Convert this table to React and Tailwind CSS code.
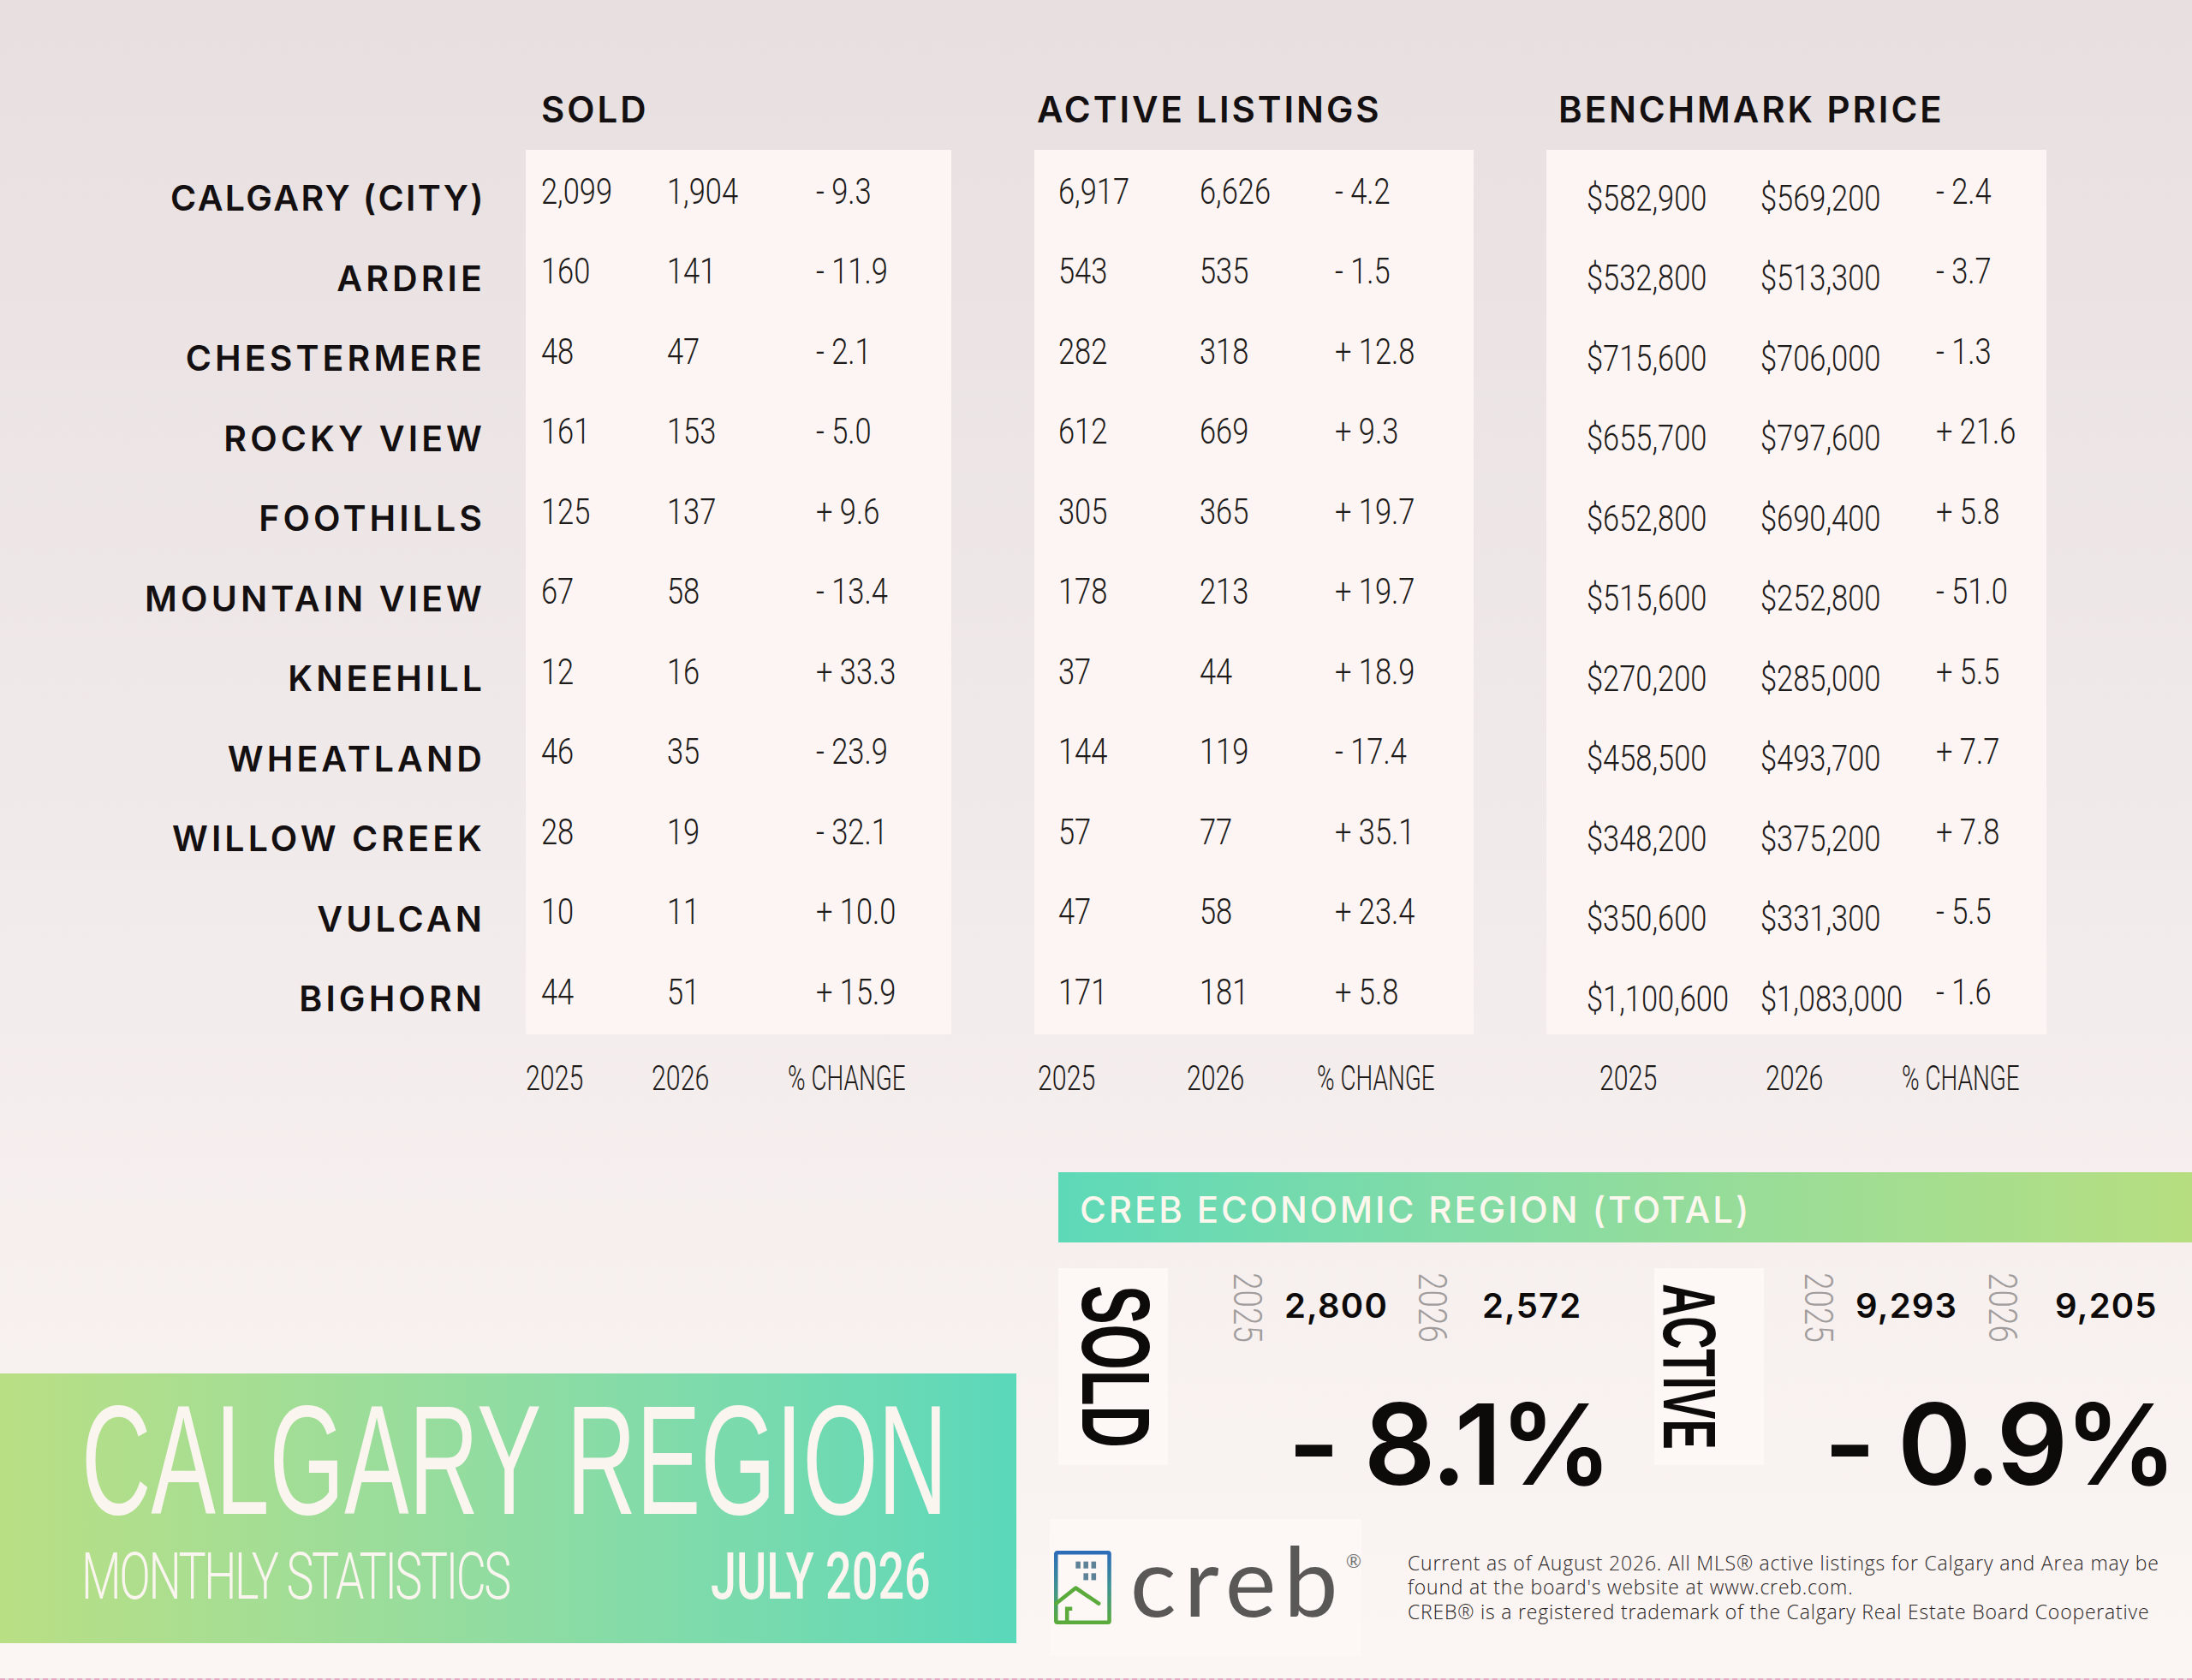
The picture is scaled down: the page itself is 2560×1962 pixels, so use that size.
import React from "react";

const rows = [
  { name: "CALGARY (CITY)", track: "tracking-[0.058em]", sold: ["2,099", "1,904", "- 9.3"], active: ["6,917", "6,626", "- 4.2"], price: ["$582,900", "$569,200", "- 2.4"] },
  { name: "ARDRIE", track: "tracking-[0.1em]", sold: ["160", "141", "- 11.9"], active: ["543", "535", "- 1.5"], price: ["$532,800", "$513,300", "- 3.7"] },
  { name: "CHESTERMERE", track: "tracking-[0.1em]", sold: ["48", "47", "- 2.1"], active: ["282", "318", "+ 12.8"], price: ["$715,600", "$706,000", "- 1.3"] },
  { name: "ROCKY VIEW", track: "tracking-[0.1em]", sold: ["161", "153", "- 5.0"], active: ["612", "669", "+ 9.3"], price: ["$655,700", "$797,600", "+ 21.6"] },
  { name: "FOOTHILLS", track: "tracking-[0.1em]", sold: ["125", "137", "+ 9.6"], active: ["305", "365", "+ 19.7"], price: ["$652,800", "$690,400", "+ 5.8"] },
  { name: "MOUNTAIN VIEW", track: "tracking-[0.1em]", sold: ["67", "58", "- 13.4"], active: ["178", "213", "+ 19.7"], price: ["$515,600", "$252,800", "- 51.0"] },
  { name: "KNEEHILL", track: "tracking-[0.1em]", sold: ["12", "16", "+ 33.3"], active: ["37", "44", "+ 18.9"], price: ["$270,200", "$285,000", "+ 5.5"] },
  { name: "WHEATLAND", track: "tracking-[0.1em]", sold: ["46", "35", "- 23.9"], active: ["144", "119", "- 17.4"], price: ["$458,500", "$493,700", "+ 7.7"] },
  { name: "WILLOW CREEK", track: "tracking-[0.1em]", sold: ["28", "19", "- 32.1"], active: ["57", "77", "+ 35.1"], price: ["$348,200", "$375,200", "+ 7.8"] },
  { name: "VULCAN", track: "tracking-[0.1em]", sold: ["10", "11", "+ 10.0"], active: ["47", "58", "+ 23.4"], price: ["$350,600", "$331,300", "- 5.5"] },
  { name: "BIGHORN", track: "tracking-[0.1em]", sold: ["44", "51", "+ 15.9"], active: ["171", "181", "+ 5.8"], price: ["$1,100,600", "$1,083,000", "- 1.6"] },
];

const NUM =
  "inline-block origin-left whitespace-nowrap font-['Roboto',sans-serif] text-[42px] font-light leading-none text-[#1d1a1a] scale-x-[0.82]";
const FOOT_NUM =
  "inline-block origin-left whitespace-nowrap font-['Roboto',sans-serif] text-[41px] font-light leading-none text-[#1d1a1a] scale-x-[0.74]";
const FOOT_TXT =
  "inline-block origin-left whitespace-nowrap font-['Roboto',sans-serif] text-[41px] font-light leading-none text-[#1d1a1a] scale-x-[0.68]";

function Panel({ data, padding, widths, dropPrices }) {
  return (
    <div className={`flex h-[1033px] flex-col bg-[#fcf5f3] pt-[2px] ${padding}`}>
      {data.map((cells, i) => (
        <div key={i} className="flex h-[93.5px] items-center">
          {cells.map((c, j) => (
            <div key={j} className={`shrink-0 ${widths[j]} ${dropPrices && j < 2 ? "pt-[16px]" : ""}`}>
              <span className={NUM}>{c}</span>
            </div>
          ))}
        </div>
      ))}
    </div>
  );
}

function YearTag({ year }) {
  return (
    <div className="flex h-[83px] w-[33px] shrink-0 items-center justify-center">
      <span className="rotate-90 scale-x-[0.8] whitespace-nowrap font-['Roboto',sans-serif] text-[46px] font-light leading-none text-[#a19c9c]">
        {year}
      </span>
    </div>
  );
}

function CrebLogo() {
  return (
    <svg width="68" height="88" viewBox="0 0 66 85">
      <defs>
        <linearGradient id="crebFrame" x1="0" y1="0" x2="0" y2="1">
          <stop offset="0" stopColor="#2c6cb8" />
          <stop offset="0.5" stopColor="#3f9392" />
          <stop offset="1" stopColor="#5aab3c" />
        </linearGradient>
      </defs>
      <rect x="2.25" y="2.25" width="61.5" height="80.5" rx="1.5" fill="none" stroke="url(#crebFrame)" strokeWidth="4.5" />
      <g fill="#5e8399">
        <rect x="25" y="12.5" width="5.5" height="8" />
        <rect x="34" y="12.5" width="5.5" height="8" />
        <rect x="43" y="12.5" width="5.5" height="8" />
        <rect x="34" y="26" width="5.5" height="8" />
        <rect x="43" y="26" width="5.5" height="8" />
      </g>
      <polyline points="2.25,61 25,43 51.5,61" fill="none" stroke="#5aab3c" strokeWidth="4.5" strokeLinejoin="round" strokeLinecap="round" />
      <polyline points="15,84 15,67 21,67" fill="none" stroke="#5aab3c" strokeWidth="4.5" />
    </svg>
  );
}

export default function App() {
  return (
    <div className="h-[1962px] w-[2560px] overflow-hidden border-b-2 border-dashed border-[#e7a8c4] bg-linear-to-b from-[#e8e0e0] via-[#f1eaea] to-[#fbf5f3]">
      {/* column titles */}
      <div className="flex h-[175px] items-start pt-[107px] font-['Inter',sans-serif] text-[42px] font-semibold leading-none tracking-[0.07em] text-[#141011]">
        <div className="w-[614px] shrink-0" />
        <div className="w-[497px] shrink-0 pl-[18px]">SOLD</div>
        <div className="ml-[97px] w-[513px] shrink-0 pl-[3px]">ACTIVE LISTINGS</div>
        <div className="ml-[85px] w-[584px] shrink-0 pl-[14px]">BENCHMARK PRICE</div>
      </div>

      {/* table */}
      <div className="flex">
        <div className="flex w-[614px] shrink-0 flex-col items-end pr-[47px] pt-[10px]">
          {rows.map((r) => (
            <div
              key={r.name}
              className={`flex h-[93.5px] items-center whitespace-nowrap font-['Inter',sans-serif] text-[41px] font-semibold leading-none text-[#141011] ${r.track}`}
            >
              {r.name}
            </div>
          ))}
        </div>
        <div className="w-[497px] shrink-0">
          <Panel data={rows.map((r) => r.sold)} padding="pl-[18px]" widths={["w-[147px]", "w-[174px]", ""]} />
        </div>
        <div className="ml-[97px] w-[513px] shrink-0">
          <Panel data={rows.map((r) => r.active)} padding="pl-[28px]" widths={["w-[165px]", "w-[158px]", ""]} />
        </div>
        <div className="ml-[85px] w-[584px] shrink-0">
          <Panel data={rows.map((r) => r.price)} padding="pl-[47px]" widths={["w-[203px]", "w-[205px]", ""]} dropPrices />
        </div>
      </div>

      {/* year labels */}
      <div className="flex h-[155px] items-start pt-[25px]">
        <div className="w-[614px] shrink-0" />
        <div className="flex w-[497px] shrink-0">
          <div className="w-[147px] shrink-0"><span className={FOOT_NUM}>2025</span></div>
          <div className="w-[159px] shrink-0"><span className={FOOT_NUM}>2026</span></div>
          <div><span className={FOOT_TXT}>% CHANGE</span></div>
        </div>
        <div className="ml-[97px] flex w-[513px] shrink-0 pl-[4px]">
          <div className="w-[174px] shrink-0"><span className={FOOT_NUM}>2025</span></div>
          <div className="w-[152px] shrink-0"><span className={FOOT_NUM}>2026</span></div>
          <div><span className={FOOT_TXT}>% CHANGE</span></div>
        </div>
        <div className="ml-[85px] flex w-[584px] shrink-0 pl-[62px]">
          <div className="w-[194px] shrink-0"><span className={FOOT_NUM}>2025</span></div>
          <div className="w-[159px] shrink-0"><span className={FOOT_NUM}>2026</span></div>
          <div><span className={FOOT_TXT}>% CHANGE</span></div>
        </div>
      </div>

      {/* bottom */}
      <div className="flex h-[597px]">
        <div className="w-[1187px] shrink-0 pt-[235px]">
          <div className="h-[315px] bg-linear-to-r from-[#b9df84] to-[#5ad8ba] pl-[95px] pt-[10px] text-[#fbf5f0]">
            <div className="whitespace-nowrap">
              <span className="inline-block origin-left scale-x-[0.62] font-['Liberation_Sans',Arial,sans-serif] text-[182px] leading-none">
                CALGARY REGION
              </span>
            </div>
            <div className="mt-[7px] flex">
              <div className="w-[735px] shrink-0">
                <span className="inline-block origin-left scale-x-[0.71] whitespace-nowrap font-['Roboto',sans-serif] text-[76px] font-light leading-none tracking-[-0.045em]">
                  MONTHLY STATISTICS
                </span>
              </div>
              <div>
                <span className="inline-block origin-left scale-x-[0.71] whitespace-nowrap font-['Roboto',sans-serif] text-[76px] font-medium leading-none">
                  JULY 2026
                </span>
              </div>
            </div>
          </div>
        </div>

        <div className="ml-[49px] flex-1">
          <div className="flex h-[82px] items-center bg-linear-to-r from-[#5dd9b8] to-[#b6de80] pl-[25px] pt-[6px]">
            <span className="whitespace-nowrap font-['Inter',sans-serif] text-[42px] font-medium leading-none tracking-[0.07em] text-[#fdf7ee]">
              CREB ECONOMIC REGION (TOTAL)
            </span>
          </div>

          <div className="mt-[30px] flex h-[230px]">
            {/* sold */}
            <div className="flex w-[696px] shrink-0">
              <div className="flex h-[230px] w-[128px] shrink-0 items-center justify-center bg-[#fdf8f6] pl-[6px]">
                <span className="rotate-90 scale-x-[0.6] whitespace-nowrap font-['Liberation_Sans',Arial,sans-serif] text-[114px] font-bold leading-none text-[#0d0a0a]">
                  SOLD
                </span>
              </div>
              <div className="flex flex-1 flex-col pt-[5px]">
                <div className="flex items-start pl-[77px]">
                  <YearTag year="2025" />
                  <div className="ml-[26px] w-[157px] shrink-0 pt-[19px] font-['Inter',sans-serif] text-[40px] font-semibold leading-none tracking-[0.03em] text-[#0d0a0a]">
                    2,800
                  </div>
                  <YearTag year="2026" />
                  <div className="ml-[41px] pt-[19px] font-['Inter',sans-serif] text-[40px] font-semibold leading-none tracking-[0.03em] text-[#0d0a0a]">
                    2,572
                  </div>
                </div>
                <div className="mt-[52px] whitespace-nowrap pl-[140px] font-['Inter',sans-serif] text-[131px] font-semibold leading-none tracking-[-0.02em] text-[#0d0a0a]">
                  - 8.1%
                </div>
              </div>
            </div>

            {/* active */}
            <div className="flex flex-1">
              <div className="flex h-[230px] w-[128px] shrink-0 items-center justify-center bg-[#fdf8f6] pr-[46px]">
                <span className="rotate-90 scale-x-[0.6] whitespace-nowrap font-['Liberation_Sans',Arial,sans-serif] text-[88px] font-bold leading-none text-[#0d0a0a]">
                  ACTIVE
                </span>
              </div>
              <div className="flex flex-1 flex-col pt-[5px]">
                <div className="flex items-start pl-[48px]">
                  <YearTag year="2025" />
                  <div className="ml-[26px] w-[156px] shrink-0 pt-[19px] font-['Inter',sans-serif] text-[40px] font-semibold leading-none tracking-[0.03em] text-[#0d0a0a]">
                    9,293
                  </div>
                  <YearTag year="2026" />
                  <div className="ml-[44px] pt-[19px] font-['Inter',sans-serif] text-[40px] font-semibold leading-none tracking-[0.03em] text-[#0d0a0a]">
                    9,205
                  </div>
                </div>
                <div className="mt-[52px] whitespace-nowrap pl-[70px] font-['Inter',sans-serif] text-[131px] font-semibold leading-none tracking-[-0.03em] text-[#0d0a0a]">
                  - 0.9%
                </div>
              </div>
            </div>
          </div>

          {/* logo + note */}
          <div className="mt-[63px] flex items-center">
            <div className="-ml-[10px] flex h-[160px] w-[364px] shrink-0 items-center bg-[#fdf8f6] pl-[5px]">
              <CrebLogo />
              <span className="-mt-[19px] ml-[22px] font-['Lato',sans-serif] text-[113px] leading-none tracking-[0.08em] text-[#595856]">
                creb
              </span>
              <span className="mb-[62px] font-['Lato',sans-serif] text-[22px] leading-none text-[#777]">®</span>
            </div>
            <div className="ml-[54px] whitespace-nowrap font-['Open_Sans',sans-serif] text-[23px] font-light leading-[28.5px] tracking-[0.035em] text-[#2a2626]">
              Current as of August 2026. All MLS® active listings for Calgary and Area may be
              <br />
              found at the board's website at www.creb.com.
              <br />
              CREB® is a registered trademark of the Calgary Real Estate Board Cooperative
            </div>
          </div>
        </div>
      </div>
    </div>
  );
}
